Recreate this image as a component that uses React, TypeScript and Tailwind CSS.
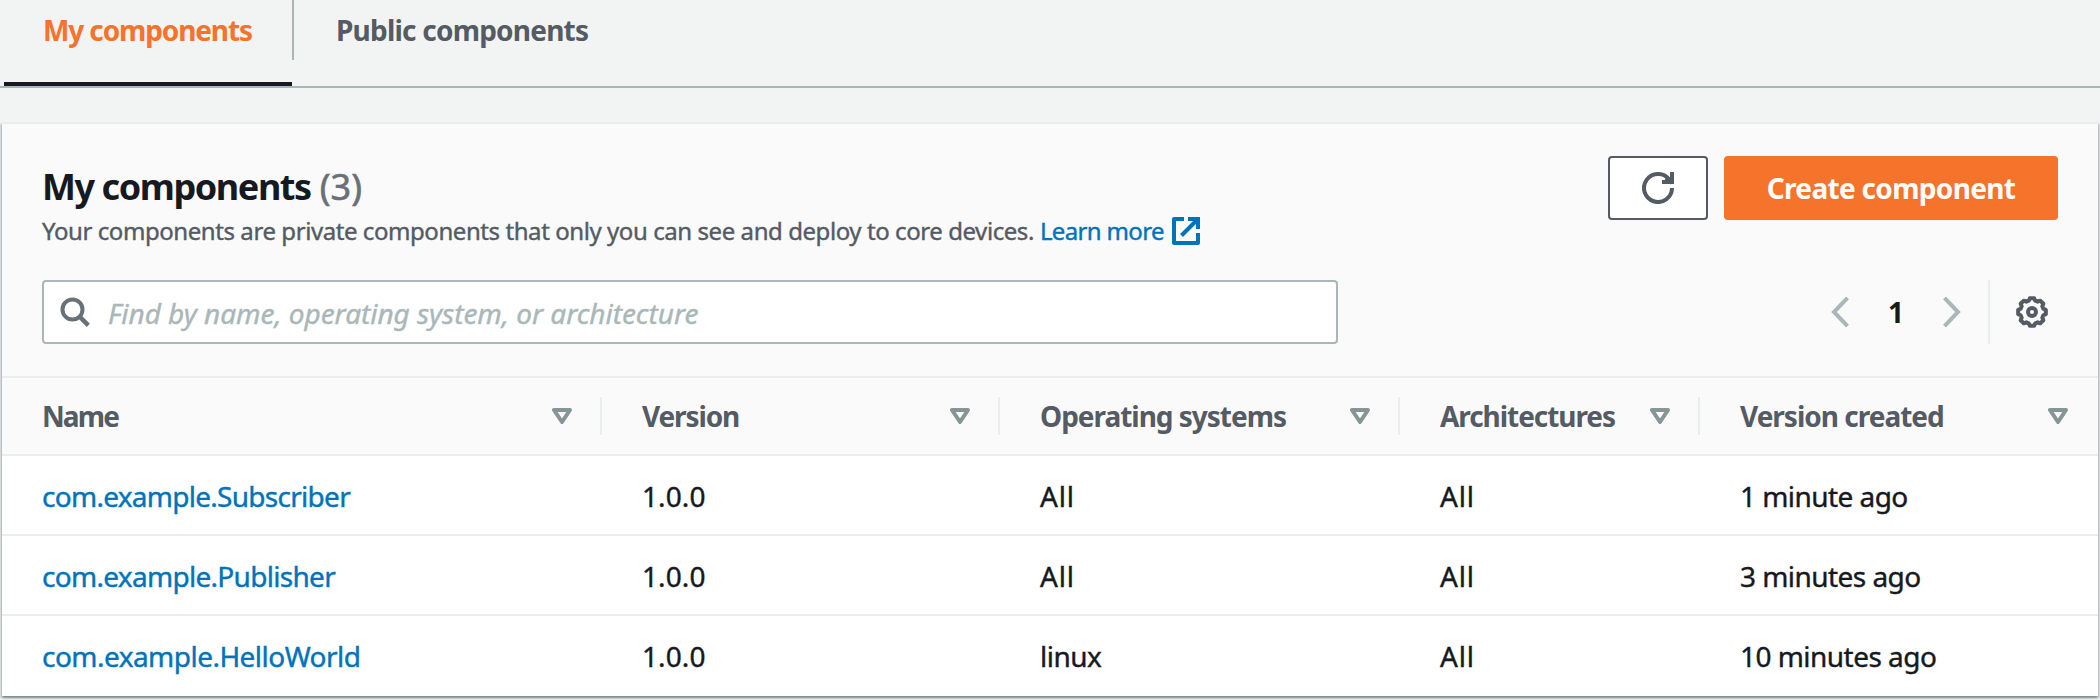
type Column = { label: string; width: string; tracking: string }
type Cell = { text: string; tracking: string }

const columns: Column[] = [
  { label: 'Name', width: 'w-[600px]', tracking: 'tracking-[-1.9px]' },
  { label: 'Version', width: 'w-[398px]', tracking: 'tracking-[-1.13px]' },
  { label: 'Operating systems', width: 'w-[400px]', tracking: 'tracking-[-1.02px]' },
  { label: 'Architectures', width: 'w-[300px]', tracking: 'tracking-[-1.06px]' },
  { label: 'Version created', width: 'w-[398px]', tracking: 'tracking-[-1px]' },
]

const version: Cell = { text: '1.0.0', tracking: 'tracking-[0.1px]' }
const all: Cell = { text: 'All', tracking: 'tracking-[0.8px]' }

const rows: Cell[][] = [
  [{ text: 'com.example.Subscriber', tracking: 'tracking-[-0.72px]' }, version, all, all, { text: '1 minute ago', tracking: 'tracking-[-0.55px]' }],
  [{ text: 'com.example.Publisher', tracking: 'tracking-[-0.7px]' }, version, all, all, { text: '3 minutes ago', tracking: 'tracking-[-0.55px]' }],
  [{ text: 'com.example.HelloWorld', tracking: 'tracking-[-0.53px]' }, version, { text: 'linux', tracking: 'tracking-[-0.5px]' }, all, { text: '10 minutes ago', tracking: 'tracking-[-0.53px]' }],
]

function ExternalIcon() {
  return (
    <svg width="28" height="28" viewBox="0 0 28 28" fill="none" stroke="currentColor" strokeWidth="4">
      <path d="M12 2H2v24h24V16" strokeLinejoin="round" />
      <path d="M16 2h10v10M25.5 2.5L9.5 18.5" />
    </svg>
  )
}

function SearchIcon() {
  return (
    <svg width="32" height="32" viewBox="0 0 32 32" fill="none" stroke="currentColor" strokeWidth="4">
      <circle cx="12.500" cy="13.500" r="10" />
      <path d="M19.500 20.500l8.800 8.800" strokeWidth="4.500" />
    </svg>
  )
}

function RefreshIcon() {
  return (
    <svg width="32" height="32" viewBox="0 0 32 32" fill="none" stroke="currentColor" strokeWidth="4">
      <path d="M30 16A14 14 0 1 1 27.500 8" />
      <path d="M30 0v10H20" />
      <path d="M24 6l6 5" />
    </svg>
  )
}

function Chevron({ right = false }: { right?: boolean }) {
  return (
    <svg width="18" height="32" viewBox="0 0 18 32" fill="none" stroke="currentColor" strokeWidth="4">
      <path d={right ? 'M1.5 1.8L15 16 1.5 30.2' : 'M16.5 1.8L3 16l13.5 14.2'} />
    </svg>
  )
}

const gearPoints = Array.from({ length: 8 }, (_, tooth) =>
  [[-9, 14], [9, 14], [16, 11.8], [29, 11.8]].map(([offset, radius]) => {
    const angle = ((tooth * 45 + offset) * Math.PI) / 180
    return `${(16 + radius * Math.cos(angle)).toFixed(2)},${(16 + radius * Math.sin(angle)).toFixed(2)}`
  }).join(' '),
).join(' ')

function GearIcon() {
  return (
    <svg width="32" height="32" viewBox="0 0 32 32" fill="none" stroke="currentColor" strokeWidth="4" strokeLinejoin="round">
      <polygon points={gearPoints} />
      <circle cx="16" cy="16" r="4" />
    </svg>
  )
}

function SortIcon() {
  return (
    <svg width="20" height="16" viewBox="0 0 20 16" fill="none" stroke="currentColor" strokeWidth="4" strokeLinejoin="round">
      <path d="M2 2h16l-8 12z" />
    </svg>
  )
}

export default function App() {
  return (
    <div className="h-[700px] w-[2100px] overflow-hidden bg-[#f2f3f3] font-['Noto_Sans',sans-serif] text-[28px] text-[#16191f]">
      <nav className="flex h-[88px] border-b-2 border-[#aab7b8] pl-1 font-bold leading-[60px]">
        <div className="h-[86px] w-[288px] border-b-4 border-[#16191f] pl-[39px] tracking-[-1.12px] text-[#f5732a]">My components</div>
        <div className="h-[60px] border-l-2 border-[#aab7b8] pl-[42px] tracking-[-0.78px] text-[#545b64]">Public components</div>
      </nav>

      <main className="mx-0.5 mt-[34px] h-[574px] border-t-2 border-[#eaeded] bg-white shadow-[0_2px_2px_0_rgba(0,28,36,0.3),2px_2px_2px_0_rgba(0,28,36,0.15),-2px_2px_2px_0_rgba(0,28,36,0.15)]">
        <header className="h-[254px] border-b-2 border-[#eaeded] bg-[#fafafa] px-10 pt-8">
          <div className="flex items-start justify-between">
            <div>
              <h1 className="flex h-[60px] text-[36px] leading-[62px]">
                <span className="font-bold tracking-[-1.43px]">My components</span>
                <span className="ml-[9px] tracking-[0.1px] text-[#687078] [-webkit-text-stroke:0.6px]">(3)</span>
              </h1>
              <p className="flex text-[24px] leading-[30px] text-[#545b64] [-webkit-text-stroke:0.4px]">
                <span className="tracking-[-0.43px]">Your components are private components that only you can see and deploy to core devices.</span>
                <a className="ml-[6px] flex items-center tracking-[-0.66px] text-[#0073bb]">
                  Learn more
                  <span className="ml-[8px]"><ExternalIcon /></span>
                </a>
              </p>
            </div>
            <div className="flex gap-4">
              <button className="flex h-16 w-[100px] items-center justify-center rounded border-2 border-[#545b64] bg-white text-[#545b64]">
                <RefreshIcon />
              </button>
              <button className="h-16 w-[334px] rounded bg-[#f5732a] font-bold leading-[62px] tracking-[-0.68px] text-white">Create component</button>
            </div>
          </div>

          <div className="mt-[34px] flex items-center justify-between">
            <div className="flex h-16 w-[1296px] items-center rounded border-2 border-[#aab7b8] bg-white pl-4">
              <span className="text-[#687078]"><SearchIcon /></span>
              <span className="ml-4 pt-0.5 italic leading-[60px] tracking-[-0.04px] text-[#aab7b8] [-webkit-text-stroke:0.4px]">Find by name, operating system, or architecture</span>
            </div>
            <div className="flex h-16 items-center pr-[10px] text-[#aab7b8]">
              <Chevron />
              <span className="w-[94px] text-center font-bold text-[#16191f]">1</span>
              <Chevron right />
              <span className="ml-[27px] mr-[26px] h-16 w-0.5 bg-[#eaeded]" />
              <span className="text-[#545b64]"><GearIcon /></span>
            </div>
          </div>
        </header>

        <div className="flex h-[78px] items-center border-b-2 border-[#eaeded] bg-[#fafafa]">
          {columns.map((c, i) => (
            <div
              key={c.label}
              className={`${c.width} flex h-[38px] items-center justify-between border-[#eaeded] pl-10 font-bold leading-[36px] text-[#545b64] ${i < columns.length - 1 ? 'border-r-2 pr-7' : 'pr-[30px]'}`}
            >
              <span className={c.tracking}>{c.label}</span>
              <span className="text-[#879596]"><SortIcon /></span>
            </div>
          ))}
        </div>

        {rows.map((row, r) => (
          <div key={r} className={`flex h-20 leading-[80px] [-webkit-text-stroke:0.4px] ${r < rows.length - 1 ? 'border-b-2 border-[#eaeded]' : ''}`}>
            {row.map((cell, i) => (
              <div key={i} className={`${columns[i].width} ${cell.tracking} pl-10 ${i === 0 ? 'text-[#0073bb]' : ''}`}>
                {cell.text}
              </div>
            ))}
          </div>
        ))}
      </main>
    </div>
  )
}
